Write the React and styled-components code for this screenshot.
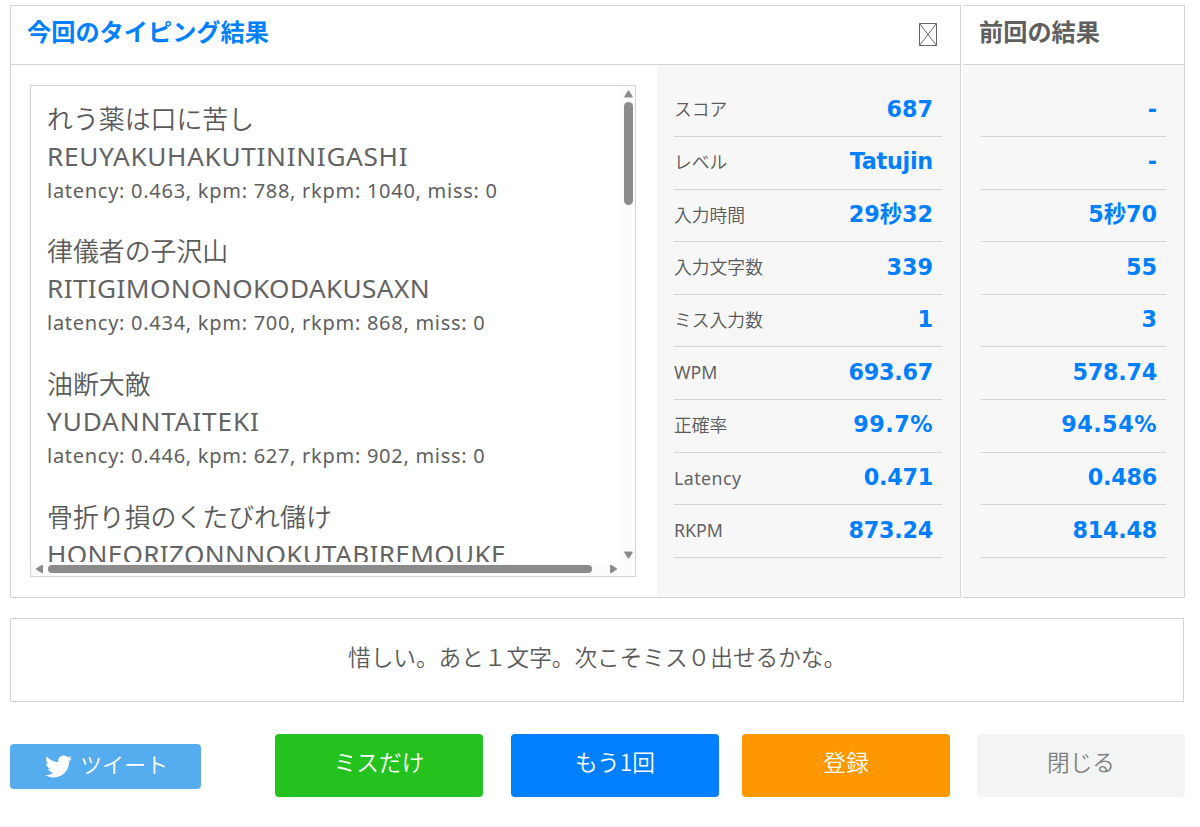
import React from "react";
import styled, { createGlobalStyle } from "styled-components";
import { FaTwitter } from "react-icons/fa";

const line = "#d4d4d4";

const Global = createGlobalStyle`
  * { box-sizing: border-box; }
  body {
    margin: 0;
    background: #fff;
    color: #5a5a5a;
    font-family: "Noto Sans", "Noto Sans CJK JP", sans-serif;
    overflow: hidden;
  }
`;

const Page = styled.main`
  width: 1200px;
  height: 827px;
  padding: 5px 15px 0 10px;
`;

const Results = styled.section`
  display: flex;
  gap: 2px;
  height: 593px;
`;

const Panel = styled.div`
  width: ${(p) => p.$width}px;
  display: flex;
  flex-direction: column;
  border: 1px solid ${line};
  border-left-width: ${(p) => (p.$open ? 0 : 1)}px;
`;

const Header = styled.header`
  height: 59px;
  flex: none;
  display: flex;
  justify-content: space-between;
  align-items: center;
  padding: 0 22px 8px 16px;
  border-bottom: 1px solid ${line};
`;

const Title = styled.h2`
  margin: 0;
  font-family: "Noto Sans CJK JP", sans-serif;
  font-size: 24.2px;
  line-height: 36px;
  font-weight: 700;
  white-space: nowrap;
  color: ${(p) => (p.$active ? "#007fff" : "#5f5f5f")};
`;

const MissingGlyph = styled.svg`
  width: 20px;
  height: 24px;
  margin-top: 8px;
`;

const Body = styled.div`
  flex: 1;
  display: flex;
  min-height: 0;
`;

const LogArea = styled.div`
  width: 646px;
  padding: 20px 21px 20px 19px;
`;

const LogFrame = styled.div`
  height: 492px;
  display: grid;
  grid-template: minmax(0, 1fr) 14px / minmax(0, 1fr) 14px;
  border: 1px solid ${line};
`;

const Log = styled.div`
  overflow: hidden;
  padding: 12.5px 16px 0;
  white-space: nowrap;
`;

const Entry = styled.article`
  height: 132.7px;
`;

const Phrase = styled.div`
  font-family: "Noto Sans CJK JP", sans-serif;
  font-size: 25.9px;
  line-height: 38px;
  font-weight: 350;
`;

const Romaji = styled.div`
  font-size: 26.2px;
  line-height: 38px;
  color: #636363;
  letter-spacing: ${(p) => p.$track}px;
`;

const Stats = styled.div`
  font-size: 20px;
  line-height: 31px;
  color: #606060;
  letter-spacing: 0.72px;
`;

const Track = styled.div`
  display: flex;
  flex-direction: ${(p) => (p.$vertical ? "column" : "row")};
  align-items: center;
  background: #fcfcfc;
  padding: ${(p) => (p.$vertical ? "4px 0 3px" : "0 3px 1px 4px")};
`;

const Thumb = styled.div`
  width: ${(p) => p.$w}px;
  height: ${(p) => p.$h}px;
  margin: ${(p) => (p.$vertical ? "4px 0 auto" : "0 auto 0 4px")};
  border-radius: 5px;
  background: #8b8b8b;
`;

const ArrowIcon = styled.svg`
  width: 9px;
  height: 8px;
  flex: none;
  fill: #8b8b8b;
  transform: rotate(${(p) => p.$turn}deg);
`;

const Corner = styled.div`
  background: #fcfcfc;
`;

const Scores = styled.dl`
  flex: 1;
  margin: 0;
  padding: 19.4px 18px 0 ${(p) => p.$inset}px;
  background: #f7f7f7;
`;

const ScoreRow = styled.div`
  height: 52.6px;
  display: flex;
  justify-content: space-between;
  align-items: center;
  padding: 0 9px 2.6px 0;
  border-bottom: 1px solid ${line};
`;

const Label = styled.dt`
  font-size: 17.8px;
  font-weight: ${(p) => (p.$latin ? 400 : 350)};
  color: ${(p) => (p.$latin ? "#636363" : "inherit")};
  line-height: 26px;
  padding-top: 1px;
  white-space: nowrap;
  letter-spacing: ${(p) => p.$track}px;
`;

const Value = styled.dd`
  margin: 0 0 0 auto;
  font-family: "DejaVu Sans", "Noto Sans CJK JP", sans-serif;
  font-size: 22.3px;
  font-weight: 700;
  line-height: 30px;
  color: #007fff;
  white-space: nowrap;
  letter-spacing: ${(p) => p.$track}px;
`;

const Message = styled.p`
  height: 84px;
  width: 1174px;
  margin: 20px 0 0;
  padding: 0 0 7px 337px;
  display: flex;
  align-items: center;
  border: 1px solid ${line};
  font-family: "Noto Sans CJK JP", sans-serif;
  font-size: 22.65px;
  font-weight: 350;
  white-space: nowrap;
`;

const Actions = styled.nav`
  display: flex;
  align-items: center;
  margin-top: 32px;
`;

const Button = styled.button`
  width: 208px;
  height: 63px;
  margin: 0 0 0 ${(p) => p.$gap}px;
  padding: 0 0 8px;
  border: 0;
  border-radius: 4px;
  background: ${(p) => p.$bg};
  color: ${(p) => p.$fg || "#fff"};
  font-family: "Noto Sans CJK JP", sans-serif;
  font-size: 22.7px;
  font-weight: 350;
`;

const Tweet = styled.button`
  width: 191px;
  height: 45px;
  margin: 2px 0 0;
  padding: 0 0 0 35px;
  display: flex;
  align-items: center;
  gap: 8px;
  border: 0;
  border-radius: 4px;
  background: #55acee;
  color: #fff;
  font-family: "Noto Sans CJK JP", sans-serif;
  font-size: 22px;
  font-weight: 350;
`;

const TweetText = styled.span`
  line-height: 30px;
  margin-top: -8px;
`;

const entries = [
  ["れう薬は口に苦し", "REUYAKUHAKUTININIGASHI", "latency: 0.463, kpm: 788, rkpm: 1040, miss: 0", 0.68],
  ["律儀者の子沢山", "RITIGIMONONOKODAKUSAXN", "latency: 0.434, kpm: 700, rkpm: 868, miss: 0", 0.38],
  ["油断大敵", "YUDANNTAITEKI", "latency: 0.446, kpm: 627, rkpm: 902, miss: 0", 0.85],
  ["骨折り損のくたびれ儲け", "HONEORIZONNNOKUTABIREMOUKE", "", 0.3],
];

const scores = [
  ["スコア", "687", "-"],
  ["レベル", "Tatujin", "-"],
  ["入力時間", "29秒32", "5秒70"],
  ["入力文字数", "339", "55"],
  ["ミス入力数", "1", "3"],
  ["WPM", "693.67", "578.74"],
  ["正確率", "99.7%", "94.54%"],
  ["Latency", "0.471", "0.486"],
  ["RKPM", "873.24", "814.48"],
];

const isLatin = (text) => /^[A-Za-z]+$/.test(text);

const labelTrack = (text) => (text === "Latency" ? 0.45 : 0);

const valueTrack = (text) => {
  if (text.endsWith("%")) return 0.5;
  if (text === "Tatujin" || text.includes(".")) return -0.25;
  return 0;
};

const Arrow = ({ turn = 0 }) => (
  <ArrowIcon $turn={turn} viewBox="0 0 9 8">
    <path d="M4.5 .5Q5 .5 5.3 1L8.7 6.4Q9 7.5 8 7.5H1Q0 7.5 .3 6.4L3.7 1Q4 .5 4.5 .5Z" />
  </ArrowIcon>
);

export default function App() {
  return (
    <Page>
      <Global />
      <Results>
        <Panel $width={951}>
          <Header>
            <Title $active>今回のタイピング結果</Title>
            <MissingGlyph viewBox="0 0 20 24" fill="none" stroke="#666">
              <path d="M1.5 .5H18.5V22.5H1.5ZM1.5 .5L18.5 22.5M18.5 .5L1.5 22.5" />
            </MissingGlyph>
          </Header>
          <Body>
            <LogArea>
              <LogFrame>
                <Log>
                  {entries.map(([phrase, romaji, stats, track]) => (
                    <Entry key={romaji}>
                      <Phrase>{phrase}</Phrase>
                      <Romaji $track={track}>{romaji}</Romaji>
                      <Stats>{stats}</Stats>
                    </Entry>
                  ))}
                </Log>
                <Track $vertical>
                  <Arrow />
                  <Thumb $vertical $w={9} $h={103} />
                  <Arrow turn={180} />
                </Track>
                <Track>
                  <Arrow turn={-90} />
                  <Thumb $w={544} $h={8} />
                  <Arrow turn={90} />
                </Track>
                <Corner />
              </LogFrame>
            </LogArea>
            <Scores $inset={17}>
              {scores.map(([label, value]) => (
                <ScoreRow key={label}>
                  <Label $latin={isLatin(label)} $track={labelTrack(label)}>{label}</Label>
                  <Value $track={valueTrack(value)}>{value}</Value>
                </ScoreRow>
              ))}
            </Scores>
          </Body>
        </Panel>
        <Panel $width={222} $open>
          <Header>
            <Title>前回の結果</Title>
          </Header>
          <Body>
            <Scores $inset={18}>
              {scores.map(([label, , previous]) => (
                <ScoreRow key={label}>
                  <Value $track={valueTrack(previous)}>{previous}</Value>
                </ScoreRow>
              ))}
            </Scores>
          </Body>
        </Panel>
      </Results>
      <Message>惜しい。あと１文字。次こそミス０出せるかな。</Message>
      <Actions>
        <Tweet>
          <FaTwitter size={27} />
          <TweetText>ツイート</TweetText>
        </Tweet>
        <Button $gap={74} $bg="#24c21f">ミスだけ</Button>
        <Button $gap={28} $bg="#007fff">もう1回</Button>
        <Button $gap={23} $bg="#ff9800">登録</Button>
        <Button $gap={27} $bg="#f3f5f5" $fg="#808080">閉じる</Button>
      </Actions>
    </Page>
  );
}
